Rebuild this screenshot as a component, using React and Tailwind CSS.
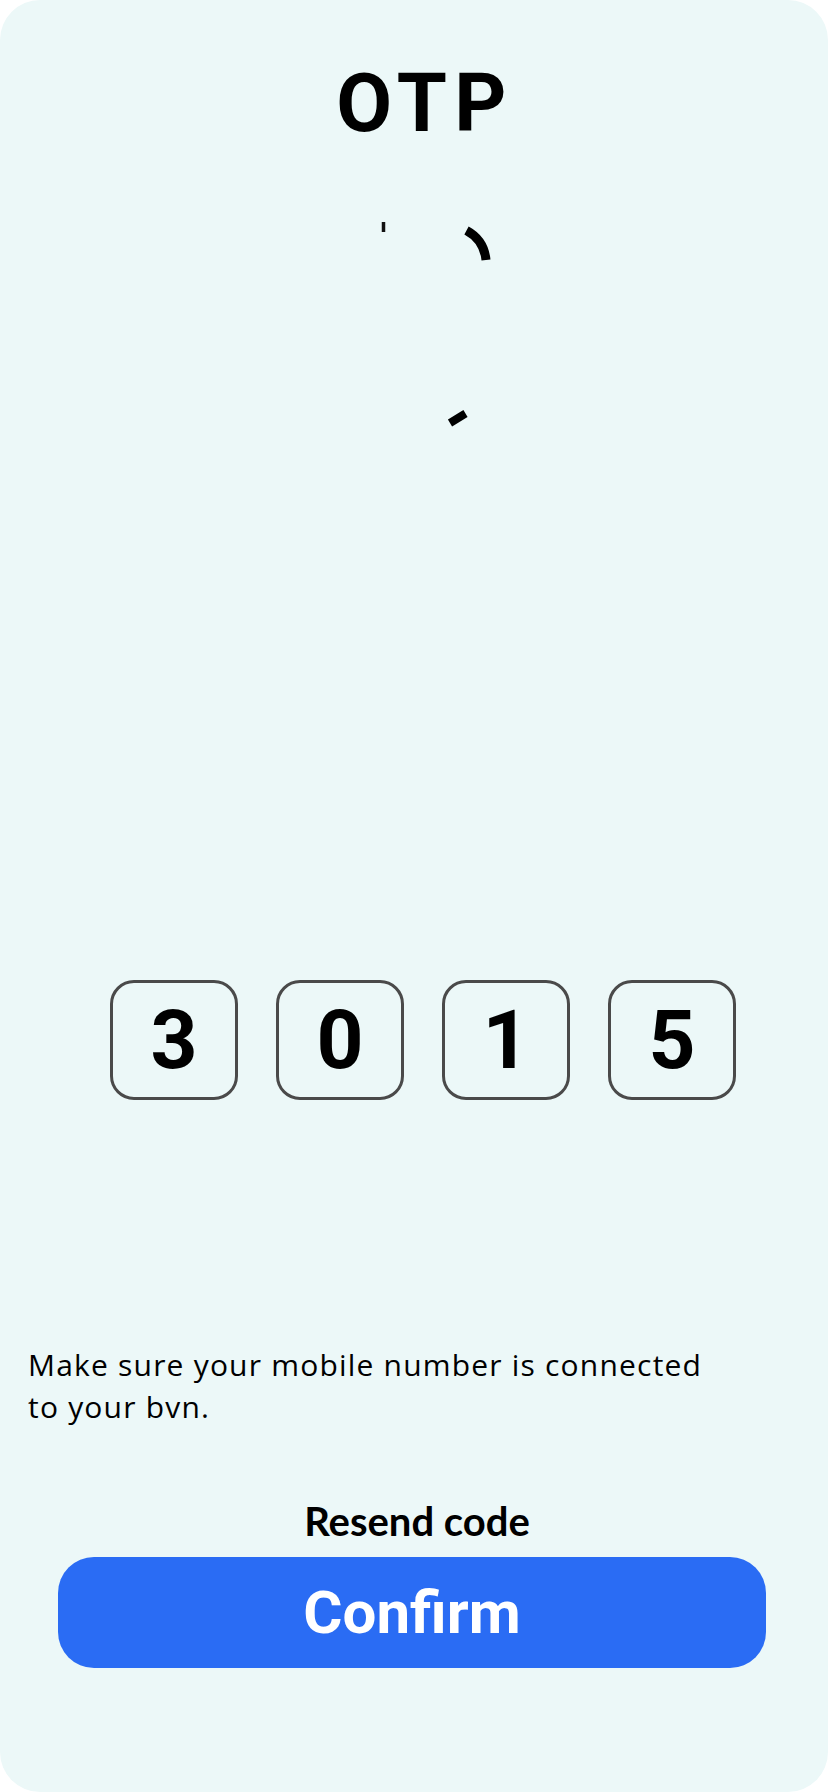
import React from 'react';

const digits = ['3', '0', '1', '5'];

// frozen frame of the loading spinner
const Spinner = () => (
  <svg width="828" height="336" viewBox="0 0 828 336" className="block">
    <line x1="383.5" y1="78" x2="383.5" y2="88" stroke="#111" strokeWidth="3.5" />
    <path d="M 466.5 86.5 Q 484 96 486 116" fill="none" stroke="#000" strokeWidth="9" />
    <line x1="450" y1="279" x2="465.5" y2="269.5" stroke="#000" strokeWidth="8" />
  </svg>
);

export default function App() {
  return (
    <div className="w-[828px] h-[1792px] bg-white">
      <div className="w-full h-full bg-[#ecf8f8] rounded-[40px] flex flex-col">
        <h1 className="pt-[63px] pl-[22px] text-center text-[81px] leading-none font-bold tracking-[0.09em] text-black font-[Roboto,sans-serif]">
          OTP
        </h1>

        <Spinner />

        <div className="mt-[500px] flex gap-[38px] pl-[110px]">
          {digits.map((d, i) => (
            <div
              key={i}
              className="w-[128px] h-[120px] border-[3px] border-[#4a4a4a] rounded-[24px] flex items-center justify-center text-[82px] font-bold text-black leading-none font-[Roboto,sans-serif]"
            >
              {d}
            </div>
          ))}
        </div>

        <p className="mt-[244px] pl-[28px] w-[740px] text-[30px] leading-[42px] tracking-[0.04em] text-black font-['Open_Sans',sans-serif]">
          Make sure your mobile number is connected to your bvn.
        </p>

        <div className="mt-[73px] text-center text-[40px] leading-none font-bold text-black pl-[6px] font-[Lato,sans-serif]">
          Resend code
        </div>

        <button className="mt-[16px] ml-[58px] w-[708px] h-[111px] rounded-[36px] bg-[#2a6cf4] text-white text-[60px] font-bold leading-none font-[Roboto,sans-serif]">
          Confirm
        </button>
      </div>
    </div>
  );
}
